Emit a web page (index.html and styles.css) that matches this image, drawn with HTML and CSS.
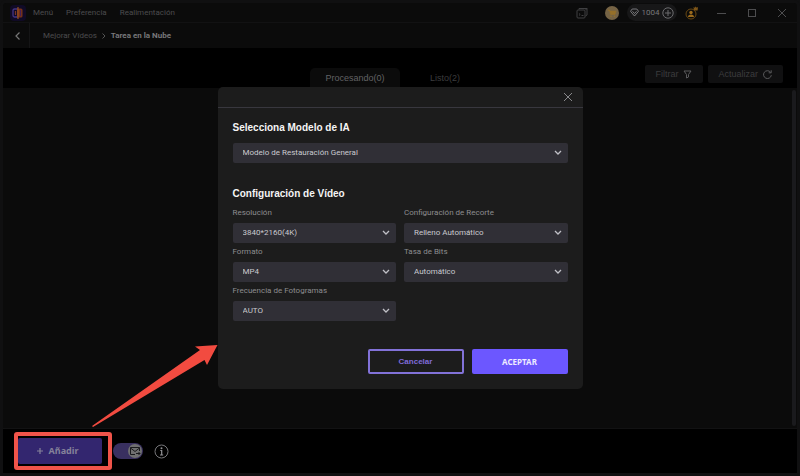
FILE: index.html
```
<!DOCTYPE html>
<html lang="es">

<head>
  <meta charset="utf-8">
  <meta name="viewport" content="width=device-width">
  <title>Tarea en la Nube</title>
  <link rel="stylesheet" href="styles.css">
</head>

<body>
  <div class="app">
    <header class="titlebar">
      <svg class="logo" viewBox="0 0 16 16" width="16" height="16">
        <rect width="16" height="16" rx="4" fill="#100a26" />
        <path d="M8 4H4.500Q3 4 3 5.500V10.500Q3 12 4.500 12H8" fill="none" stroke="#453484" stroke-width="1.300" />
        <path d="M5.500 6v4" stroke="#7a3528" stroke-width="1.200" />
        <rect x="7" y="3.500" width="5.500" height="9" rx="1.500" fill="#74301a" />
        <path d="M8 2v12" stroke="#94501e" stroke-width="1.200" />
        <path d="M10.500 5v6" stroke="#432058" stroke-width="1" />
      </svg>
      <nav class="menu">
        <a href="#">Menú</a>
        <a href="#">Preferencia</a>
        <a href="#">Realimentación</a>
      </nav>
      <div class="account">
        <button class="icon-btn history" aria-label="Historial">
          <svg viewBox="0 0 12 12" width="12" height="12" fill="none" stroke="#404042">
            <path d="M3 2.500V1.500H11V8L9.500 9" />
            <rect x="1" y="3" width="8" height="8" rx="1" />
            <path d="M9.500 3L11 1.500M3 6.500l1.200 1L3 8.500M5.500 8.500h2" />
          </svg>
        </button>
        <button class="icon-btn" aria-label="Tienda">
          <svg viewBox="0 0 14 14" width="14" height="14">
            <circle cx="7" cy="7" r="7" fill="#756345" />
            <path d="M3 4h1.500L5.500 8.500H10L11 5H5z" fill="#967029" stroke="#967029" stroke-width=".6" />
            <circle cx="6" cy="10.300" r=".8" fill="#967029" />
            <circle cx="9.500" cy="10.300" r=".8" fill="#967029" />
          </svg>
        </button>
        <div class="credits">
          <svg viewBox="0 0 9 9" width="9" height="9" fill="none" stroke="#858588" stroke-width=".9">
            <path d="M2.200 1h4.600L8.500 3.300L4.500 8L.5 3.300zM2.500 3.300L4.500 5.500L6.500 3.300" />
          </svg>
          <span>1004</span>
          <button class="icon-btn" aria-label="Comprar créditos">
            <svg viewBox="0 0 12 12" width="12" height="12" fill="none" stroke="#6c6c6f">
              <circle cx="6" cy="6" r="5.200" />
              <path d="M6 3v6M3 6h6" />
            </svg>
          </button>
        </div>
        <button class="icon-btn" aria-label="Cuenta">
          <svg viewBox="0 0 13 14" width="13" height="14">
            <circle cx="6" cy="8" r="5" fill="none" stroke="#684812" />
            <circle cx="6" cy="6.500" r="1.700" fill="#9a6a1c" />
            <path d="M3 11Q3 8.500 6 8.500T9 11z" fill="#9a6a1c" />
            <path d="M8.500 1l1.200.8L10.700.5l1 1.300L13 1l-.4 3.500H9z" fill="#7d5518" />
          </svg>
        </button>
      </div>
      <div class="window-controls">
        <button class="icon-btn" aria-label="Minimizar">
          <svg viewBox="0 0 10 10" width="10" height="10"><path d="M0 5.500h9" /></svg>
        </button>
        <button class="icon-btn" aria-label="Maximizar">
          <svg viewBox="0 0 10 10" width="10" height="10"><rect x="1.500" y="1.500" width="7" height="7" /></svg>
        </button>
        <button class="icon-btn" aria-label="Cerrar">
          <svg viewBox="0 0 10 10" width="10" height="10"><path d="M1 1l8 8M9 1L1 9" /></svg>
        </button>
      </div>
    </header>

    <div class="breadcrumb">
      <button class="icon-btn back" aria-label="Atrás">
        <svg viewBox="0 0 8 8" width="8" height="8"><path d="M5.500 .5L2 4l3.500 3.500" fill="none" stroke="#777" stroke-width="1.200" /></svg>
      </button>
      <a href="#">Mejorar Vídeos</a>
      <svg viewBox="0 0 6 6" width="6" height="6"><path d="M1.500 .5L4 3L1.500 5.500" fill="none" stroke="#555" /></svg>
      <strong>Tarea en la Nube</strong>
    </div>

    <div class="toolbar">
      <div class="tabs">
        <button class="tab active">Procesando(0)</button>
        <button class="tab">Listo(2)</button>
      </div>
      <div class="tools">
        <button class="tool">Filtrar
          <svg viewBox="0 0 9 9" width="9" height="9"><path d="M1 1h7L5.500 4.500V7L3.500 8V4.500z" /></svg>
        </button>
        <button class="tool">Actualizar
          <svg viewBox="0 0 9 9" width="9" height="9"><path d="M8.300 5.200A3.900 3.900 0 1 1 7.500 2.200M8.200.3V2.800H5.700" /></svg>
        </button>
      </div>
    </div>

    <main class="task-list">
      <div class="scrollbar"></div>
    </main>

    <footer class="actions">
      <div class="add-wrap">
        <button class="add">
          <svg viewBox="0 0 8 8" width="8" height="8"><path d="M4 1v6M1 4h6" stroke="#85829a" stroke-width="1.200" /></svg>
          Añadir
        </button>
        <div class="highlight"></div>
      </div>
      <label class="switch">
        <input type="checkbox" aria-label="Avisar por correo" checked>
        <svg viewBox="0 0 14 14" width="14" height="14">
          <circle cx="7" cy="7" r="7" fill="#6f6f70" />
          <path d="M7 10.500H2.500v-7h9V7M2.500 4L7 7.500L11.500 4M8 9.500h4M10.500 8L12 9.500L10.500 11" fill="none" stroke="#19191c" />
        </svg>
      </label>
      <button class="icon-btn" aria-label="Información">
        <svg viewBox="0 0 15 15" width="15" height="15">
          <circle cx="7.500" cy="7.500" r="6.500" fill="none" stroke="#77777a" />
          <circle cx="7.500" cy="4.300" r="1" fill="#929295" />
          <path d="M6.300 6.500h1.400v4.500M6 11h3.200" fill="none" stroke="#929295" stroke-width="1.200" />
        </svg>
      </button>
    </footer>
  </div>

  <div class="overlay">
    <form class="modal" role="dialog" aria-label="Configuración">
      <div class="modal-header">
        <button type="button" class="icon-btn" aria-label="Cerrar diálogo">
          <svg viewBox="0 0 10 10" width="10" height="10"><path d="M1 1l8 8M9 1L1 9" stroke="#88888b" /></svg>
        </button>
      </div>
      <div class="modal-body">
        <h2><label for="model">Selecciona Modelo de IA</label></h2>
        <div class="select">
          <select id="model"><option>Modelo de Restauración General</option></select>
          <svg viewBox="0 0 8 6" width="8" height="6"><path d="M1 1l3 3l3-3" /></svg>
        </div>

        <h2 class="video-title">Configuración de Vídeo</h2>
        <div class="fields">
          <div class="field">
            <label for="resolution">Resolución</label>
            <div class="select">
              <select id="resolution"><option>3840*2160(4K)</option></select>
              <svg viewBox="0 0 8 6" width="8" height="6"><path d="M1 1l3 3l3-3" /></svg>
            </div>
          </div>
          <div class="field">
            <label for="crop">Configuración de Recorte</label>
            <div class="select">
              <select id="crop"><option>Relleno Automático</option></select>
              <svg viewBox="0 0 8 6" width="8" height="6"><path d="M1 1l3 3l3-3" /></svg>
            </div>
          </div>
          <div class="field">
            <label for="format">Formato</label>
            <div class="select">
              <select id="format"><option>MP4</option></select>
              <svg viewBox="0 0 8 6" width="8" height="6"><path d="M1 1l3 3l3-3" /></svg>
            </div>
          </div>
          <div class="field">
            <label for="bitrate">Tasa de Bits</label>
            <div class="select">
              <select id="bitrate"><option>Automático</option></select>
              <svg viewBox="0 0 8 6" width="8" height="6"><path d="M1 1l3 3l3-3" /></svg>
            </div>
          </div>
          <div class="field">
            <label for="fps">Frecuencia de Fotogramas</label>
            <div class="select">
              <select id="fps"><option>AUTO</option></select>
              <svg viewBox="0 0 8 6" width="8" height="6"><path d="M1 1l3 3l3-3" /></svg>
            </div>
          </div>
        </div>

        <div class="modal-actions">
          <button type="button" class="btn cancel">Cancelar</button>
          <button type="button" class="btn accept">ACEPTAR</button>
        </div>
      </div>
    </form>
  </div>

  <svg class="arrow" viewBox="0 0 126 82" width="126" height="82">
    <path d="M0 81L108 5L103 1.500L125.500 0L115 20L112.500 15L1 82z" fill="#f24b40" />
  </svg>
</body>

</html>
```
FILE: styles.css
```
* {
  box-sizing: border-box;
}

body {
  margin: 0;
  background-color: #101011;
  color: #4c4c4e;
  font-family: Roboto, "Liberation Sans", Arial, sans-serif;
  font-size: 8px;
  line-height: 12px;
}

a {
  color: inherit;
  text-decoration: none;
}

button,
select {
  font: inherit;
  color: inherit;
}

svg {
  display: block;
  flex-shrink: 0;
}

.icon-btn {
  display: flex;
  padding: 0;
  border: none;
  background: none;
}

/* Main window */
.app {
  position: relative;
  display: flex;
  flex-direction: column;
  min-height: 100vh;
  border: 3px solid #101011;
  border-radius: 6px;
  background-color: #0b0b0b;
}

.titlebar {
  display: flex;
  align-items: center;
  height: 20px;
  padding: 0 10px 0 7px;
  border-bottom: 1px solid #121213;
}

.menu {
  display: flex;
  gap: 13px;
  margin-left: 7px;
}

.account {
  display: flex;
  align-items: center;
  gap: 8px;
  margin-left: auto;
}

.history {
  margin-right: 9px;
}

.credits {
  display: flex;
  align-items: center;
  justify-content: space-between;
  width: 50px;
  height: 17px;
  padding: 0 3px;
  border-radius: 9px;
  background-color: #171718;
  color: #77777a;
}

.window-controls {
  display: flex;
  gap: 20px;
  margin-left: 19px;
  fill: none;
  stroke: #4d4d4f;
}

.breadcrumb {
  display: flex;
  align-items: center;
  gap: 4px;
  height: 25px;
}

.breadcrumb strong {
  color: #77777a;
}

.back {
  align-items: center;
  justify-content: center;
  width: 27px;
  height: 25px;
  padding-left: 3px;
  margin-right: 9px;
  border-right: 1px solid #151516;
}

/* Tabs and tools */
.toolbar {
  display: grid;
  grid-template-columns: 1fr auto 1fr;
  align-items: end;
  height: 40px;
  background-color: #000;
  font-family: "Liberation Sans", Arial, sans-serif;
  font-size: 9px;
}

.tabs {
  display: flex;
  grid-column: 2;
}

.tab {
  width: 90px;
  height: 20px;
  padding: 0;
  border: none;
  border-radius: 5px 5px 0 0;
  background: none;
  color: #3c3c3e;
}

.tab.active {
  background-color: #0b0b0b;
  color: #626264;
}

.tools {
  display: flex;
  justify-content: flex-end;
  gap: 5px;
  padding: 0 14px 5px 0;
}

.tool {
  display: flex;
  align-items: center;
  gap: 5px;
  height: 18px;
  padding: 0 11px 0 10px;
  border: none;
  border-radius: 2px;
  background-color: #101011;
  color: #3c3c3e;
}

.tool svg {
  fill: none;
  stroke: #5b5b5d;
}

.task-list {
  display: flex;
  flex: 1;
  justify-content: flex-end;
  padding: 2px 1px;
}

.scrollbar {
  width: 4px;
  border-radius: 2px;
  background-color: #1a1a1d;
}

/* Bottom bar */
.actions {
  display: flex;
  align-items: center;
  gap: 11px;
  height: 45px;
  padding-left: 15px;
  border-top: 1px solid #121213;
  background-color: #000;
}

.add-wrap {
  position: relative;
}

.add {
  display: flex;
  align-items: center;
  justify-content: center;
  gap: 5px;
  width: 84px;
  height: 26px;
  padding: 0 6px 0 0;
  border: none;
  border-radius: 2px;
  background-color: #33266f;
  color: #85829a;
  font-family: "Noto Sans", sans-serif;
  font-size: 9px;
  font-weight: bold;
}

.highlight {
  position: absolute;
  inset: -6px -10px -6px -4px;
  border: 4px solid #f0544a;
  border-radius: 3px;
}

.switch {
  display: flex;
  align-items: center;
  justify-content: flex-end;
  width: 30px;
  height: 16px;
  padding-right: 1px;
  border-radius: 8px;
  background-color: #393060;
}

.switch input {
  position: absolute;
  opacity: 0;
}

/* Dialog */
.overlay {
  position: fixed;
  inset: 0;
  display: flex;
  align-items: center;
  justify-content: center;
}

.modal {
  width: 100%;
  max-width: 365px;
  border-radius: 5px;
  background-color: #1c1c1c;
}

.modal-header {
  display: flex;
  align-items: center;
  justify-content: flex-end;
  height: 21px;
  padding-right: 10px;
  border-bottom: 1px solid #38373e;
}

.modal-body {
  padding: 14px 15px 15px;
}

h2 {
  margin: 0 0 9px;
  color: #f5f5f5;
  font-family: "Liberation Sans", Arial, sans-serif;
  font-size: 10px;
  line-height: 12px;
}

.video-title {
  margin: 25px 0 7px;
}

.fields {
  display: grid;
  grid-template-columns: 1fr 1fr;
  gap: 3px 8px;
}

.field label {
  display: block;
  margin-bottom: 4px;
  color: #8c8c8f;
}

.select {
  position: relative;
  color: #c9c9cf;
}

.select select {
  display: block;
  width: 100%;
  height: 20px;
  padding: 0 20px 0 10px;
  border: none;
  border-radius: 2px;
  background-color: #302f36;
  appearance: none;
}

.select svg {
  position: absolute;
  top: 7px;
  right: 6px;
  fill: none;
  stroke: #c0c0c6;
  stroke-width: 1.3;
  pointer-events: none;
}

.modal-actions {
  display: flex;
  justify-content: flex-end;
  gap: 8px;
  margin-top: 28px;
}

.btn {
  width: 96px;
  height: 25px;
  padding: 0;
  border: none;
  border-radius: 2px;
  font-weight: bold;
}

.cancel {
  border: 2px solid #8272d8;
  background: none;
  color: #7f6bd8;
  font-family: "Liberation Sans", Arial, sans-serif;
}

.accept {
  background-color: #6c57ff;
  color: #eeebff;
  font-family: "Noto Sans", sans-serif;
}

/* Pointer from the add button to the dialog */
.arrow {
  position: absolute;
  bottom: 49px;
  left: 92px;
}
```
